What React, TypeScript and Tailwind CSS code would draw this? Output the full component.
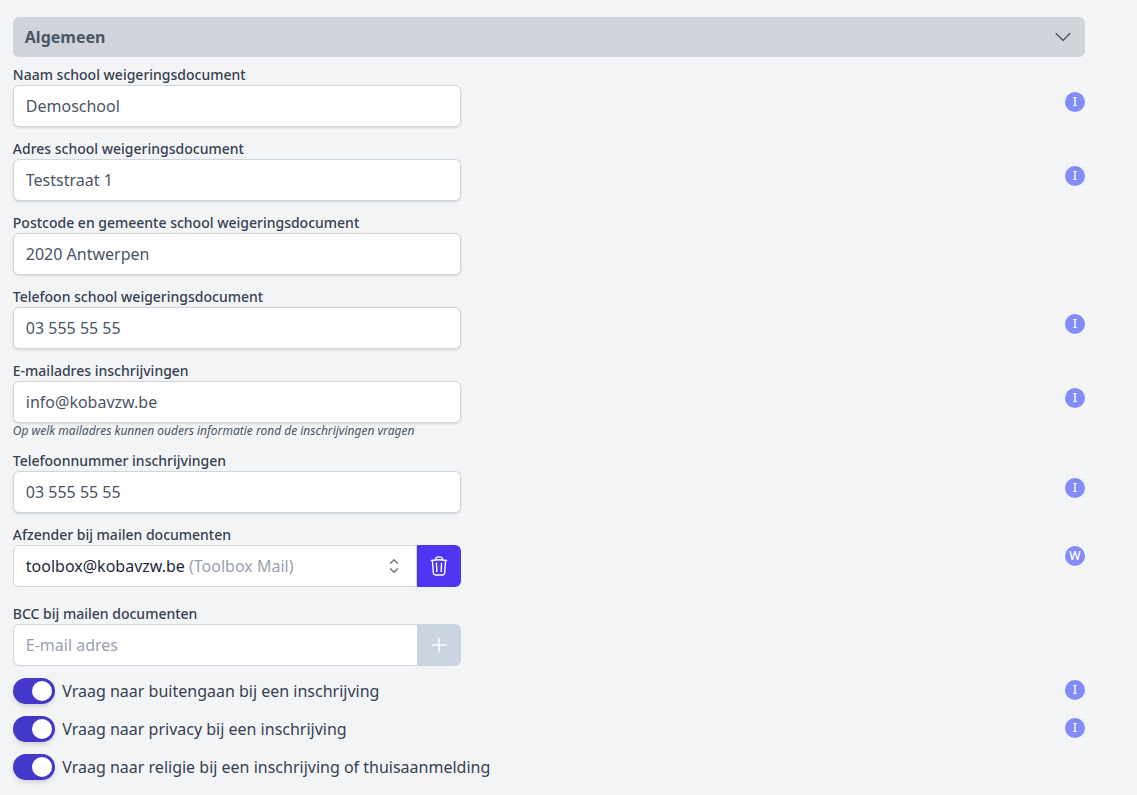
import React from 'react';
import { HiOutlineChevronDown, HiOutlineChevronUpDown, HiOutlineTrash, HiOutlinePlus } from 'react-icons/hi2';

const Badge = ({ letter, className = '' }: { letter: string; className?: string }) => (
    <span className={`flex h-5 w-5 shrink-0 items-center justify-center rounded-full bg-[#818cf8] text-xs font-medium text-white ${className}`}>
        {letter}
    </span>
);

const TextField = ({ label, value, hint, badge }: { label: string; value: string; hint?: string; badge?: string }) => (
    <div className="flex justify-between">
        <div className="w-[448px]">
            <label className="block h-5 text-sm leading-5 font-medium text-gray-700">{label}</label>
            <input
                readOnly
                value={value}
                className="block h-[42px] w-full rounded-md border border-gray-300 bg-white px-3 text-base text-gray-600 shadow-sm outline-none"
            />
            {hint && <p className="h-4 text-xs leading-4 text-gray-600 italic">{hint}</p>}
        </div>
        {badge && <Badge letter={badge} className="mt-[27px]" />}
    </div>
);

const ToggleRow = ({ label, badge }: { label: string; badge?: boolean }) => (
    <div className="flex h-[26px] items-center justify-between">
        <div className="flex items-center gap-[7.5px]">
            <span className="flex h-[26px] w-[42px] items-center justify-end rounded-full bg-[#4338ca] pr-[3px] shadow-md">
                <span className="h-5 w-5 rounded-full bg-white" />
            </span>
            <span className="text-base text-gray-700">{label}</span>
        </div>
        {badge && <Badge letter="I" className="-mt-0.5" />}
    </div>
);

export default function App() {
    return (
        <div className="h-[795px] overflow-hidden bg-[#f3f4f6] pt-[17px] pl-[12.8px] font-['Noto_Sans',sans-serif]">
            <div className="w-[1072px]">
                <div className="mb-2 flex h-10 items-center justify-between rounded-md bg-[#d1d5db] pr-[11px] pl-3">
                    <span className="text-base font-bold text-gray-600">Algemeen</span>
                    <HiOutlineChevronDown size={22} className="text-gray-600" />
                </div>

                <div className="flex flex-col gap-3">
                    <TextField label="Naam school weigeringsdocument" value="Demoschool" badge="I" />
                    <TextField label="Adres school weigeringsdocument" value="Teststraat 1" badge="I" />
                    <TextField label="Postcode en gemeente school weigeringsdocument" value="2020 Antwerpen" />
                    <TextField label="Telefoon school weigeringsdocument" value="03 555 55 55" badge="I" />
                    <TextField
                        label="E-mailadres inschrijvingen"
                        value="info@kobavzw.be"
                        hint="Op welk mailadres kunnen ouders informatie rond de inschrijvingen vragen"
                        badge="I"
                    />
                    <TextField label="Telefoonnummer inschrijvingen" value="03 555 55 55" badge="I" />

                    {/* Afzender */}
                    <div className="mb-[5px] flex justify-between">
                        <div className="w-[448px]">
                            <label className="block h-5 text-sm leading-5 font-medium text-gray-700">Afzender bij mailen documenten</label>
                            <div className="flex h-[42px]">
                                <div className="flex flex-1 items-center justify-between rounded-l-md border border-gray-300 bg-white pr-[11px] pl-3 text-base">
                                    <span className="text-gray-800">
                                        toolbox@kobavzw.be <span className="text-gray-400">(Toolbox Mail)</span>
                                    </span>
                                    <HiOutlineChevronUpDown size={22} className="text-gray-500" />
                                </div>
                                <button className="flex w-11 shrink-0 items-center justify-center rounded-r-md bg-[#4f35f3] text-white">
                                    <HiOutlineTrash size={22} />
                                </button>
                            </div>
                        </div>
                        <Badge letter="W" className="mt-[21px]" />
                    </div>

                    {/* BCC */}
                    <div className="w-[448px]">
                        <label className="block h-5 text-sm leading-5 font-medium text-gray-700">BCC bij mailen documenten</label>
                        <div className="flex h-[42px]">
                            <input
                                placeholder="E-mail adres"
                                className="w-[404px] rounded-l-md border border-r-0 border-gray-300 bg-white px-3 text-base outline-none placeholder:text-gray-400"
                            />
                            <button className="flex w-11 shrink-0 items-center justify-center rounded-r-md bg-[#cbd5e1] text-white">
                                <HiOutlinePlus size={22} />
                            </button>
                        </div>
                    </div>

                    <ToggleRow label="Vraag naar buitengaan bij een inschrijving" badge />
                    <ToggleRow label="Vraag naar privacy bij een inschrijving" badge />
                    <ToggleRow label="Vraag naar religie bij een inschrijving of thuisaanmelding" />
                </div>
            </div>
        </div>
    );
}
